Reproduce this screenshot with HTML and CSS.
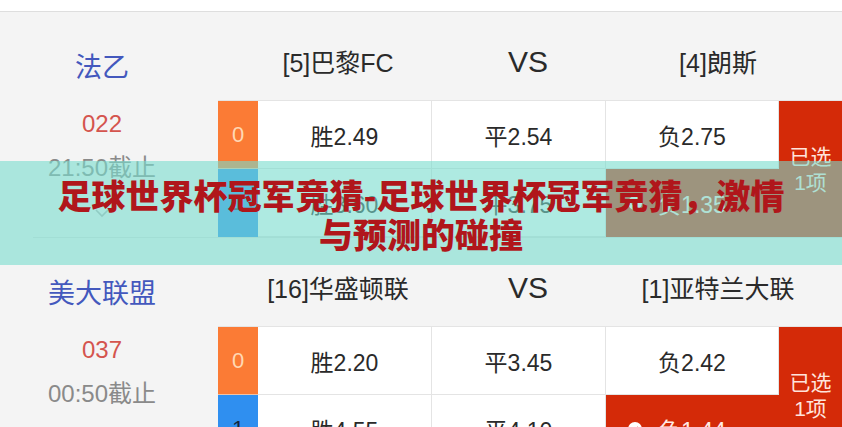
FILE: index.html
```html
<!DOCTYPE html>
<html lang="zh-CN">
<head>
  <meta charset="UTF-8">
  <meta name="viewport" content="width=device-width, initial-scale=1.0">
  <title>足球世界杯冠军竞猜</title>
  <link rel="stylesheet" href="styles.css">
</head>
<body>

  <div class="topbar"></div>

  <!-- 比赛列表 -->
  <section class="match">
    <div class="info">
      <div class="league">法乙</div>
      <div class="num">022</div>
      <div class="deadline">21:50截止</div>
      <svg class="more" width="16" height="10" viewBox="0 0 16 10"><path d="M2 2l6 6 6-6" fill="none" stroke="#b5b5b5" stroke-width="1.6"/></svg>
    </div>
    <div class="board">
      <div class="teams">
        <span>[5]巴黎FC</span>
        <span class="vs">VS</span>
        <span>[4]朗斯</span>
      </div>
      <div class="odds">
        <div class="idx idx-0">0</div>
        <div class="cell">胜2.49</div>
        <div class="cell">平2.54</div>
        <div class="cell">负2.75</div>
        <div class="picked">已选<br>1项</div>
        <div class="idx idx-1">1</div>
        <div class="cell">胜3.60</div>
        <div class="cell">平3.75</div>
        <div class="cell on"><svg class="tick" width="14" height="14" viewBox="0 0 14 14"><circle cx="7" cy="7" r="7" fill="#fff"/><path d="M3.8 7.2l2.2 2.2 4.2-4.4" fill="none" stroke="#d42a08" stroke-width="1.6"/></svg>负1.35</div>
      </div>
    </div>
  </section>

  <section class="match">
    <div class="info">
      <div class="league">美大联盟</div>
      <div class="num">037</div>
      <div class="deadline">00:50截止</div>
      <svg class="more" width="16" height="10" viewBox="0 0 16 10"><path d="M2 2l6 6 6-6" fill="none" stroke="#b5b5b5" stroke-width="1.6"/></svg>
    </div>
    <div class="board">
      <div class="teams">
        <span>[16]华盛顿联</span>
        <span class="vs">VS</span>
        <span>[1]亚特兰大联</span>
      </div>
      <div class="odds">
        <div class="idx idx-0">0</div>
        <div class="cell">胜2.20</div>
        <div class="cell">平3.45</div>
        <div class="cell">负2.42</div>
        <div class="picked">已选<br>1项</div>
        <div class="idx idx-1">1</div>
        <div class="cell">胜4.55</div>
        <div class="cell">平4.10</div>
        <div class="cell on"><svg class="tick" width="14" height="14" viewBox="0 0 14 14"><circle cx="7" cy="7" r="7" fill="#fff"/><path d="M3.8 7.2l2.2 2.2 4.2-4.4" fill="none" stroke="#d42a08" stroke-width="1.6"/></svg>负1.44</div>
      </div>
    </div>
  </section>

  <!-- 标题横幅 -->
  <h1 class="banner">足球世界杯冠军竞猜-足球世界杯冠军竞猜，激情与预测的碰撞</h1>

</body>
</html>
```

FILE: styles.css
```css
* { box-sizing: border-box; margin: 0; padding: 0; }

body {
  font-family: "Liberation Sans", "Noto Sans CJK SC", sans-serif;
  background: #f4f4f4;
  color: #222;
  overflow: hidden;
}

.topbar {
  height: 12px;
  background: #fff;
  border-bottom: 1px solid #dedede;
}

/* — MATCH ————————————— */
.match {
  display: grid;
  grid-template-columns: 218px 1fr;
}
.match + .match::before {
  content: "";
  grid-column: 1 / -1;
  height: 1px;
  margin-left: 33px;
  background: #e2e2e2;
}

.info {
  display: flex;
  flex-direction: column;
  align-items: center;
  padding-right: 14px;
}
.league {
  margin-top: 40px;
  font-size: 27px;
  line-height: 32px;
  color: #4358bd;
}
.num {
  margin-top: 25px;
  font-size: 24px;
  line-height: 30px;
  color: #d4544e;
}
.deadline {
  margin-top: 14px;
  font-size: 24px;
  line-height: 30px;
  color: #8a8a8a;
}
.more { margin-top: 25px; }

.teams {
  display: grid;
  grid-template-columns: repeat(3, 190px);
  height: 88px;
  padding: 36px 0 0 25px;
  font-size: 25px;
  line-height: 30px;
  text-align: center;
  color: #2a2a2a;
}
.teams .vs { font-size: 30px; line-height: 28px; }

/* — ODDS ————————————— */
.odds {
  display: grid;
  grid-template-columns: 40px 174px 174px 173px 63px;
  grid-template-rows: 68px 68px;
  border-top: 1px solid #e4e4e4;
}
.odds > div {
  display: flex;
  align-items: center;
  justify-content: center;
}
.cell {
  background: #fff;
  border-right: 1px solid #e4e4e4;
  border-bottom: 1px solid #e4e4e4;
  font-size: 23px;
  color: #2a2a2a;
}
.cell.on {
  background: #d42a08;
  color: #ffeae4;
  border-color: #d42a08;
}
/* the tick sits left of the label without pushing it off centre */
.tick { margin: 0 16px 0 -30px; }

.idx { font-size: 22px; }
.idx-0 { background: #fb7b35; color: #ffd8b4; border-bottom: 1px solid #f0c2a4; }
.idx-1 { background: #2f8ff0; color: #15263f; }

.picked {
  grid-row: span 2;
  grid-column: 5;
  background: #d42a08;
  color: #ffe4dc;
  font-size: 21px;
  line-height: 26px;
  text-align: center;
  padding-top: 2px;
}

/* — BANNER ————————————— */
.banner {
  position: absolute;
  top: 161px;
  left: 0;
  right: 0;
  height: 104px;
  padding: 14px 50px 0;
  background: rgba(120, 220, 205, 0.6);
  font-family: "Noto Sans CJK SC", sans-serif;
  font-weight: 900;
  font-size: 34px;
  line-height: 39px;
  color: #b0161b;
  text-align: center;
}
```
